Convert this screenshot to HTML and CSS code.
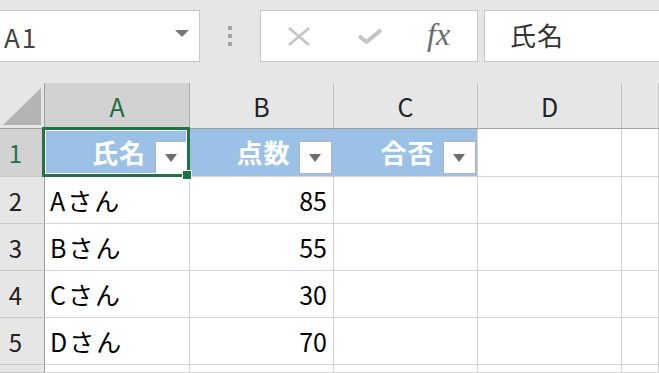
FILE: index.html
```html
<!DOCTYPE html>
<html lang="ja">
<head>
    <meta charset="UTF-8">
    <meta name="viewport" content="width=device-width, initial-scale=1.0">
    <title>Sheet</title>
    <link rel="stylesheet" href="styles.css">
</head>
<body>
    <div class="formula-bar">
        <div class="name-box">
            <span class="name-text">A1</span>
            <span class="name-arrow"></span>
        </div>
        <div class="grip"><i></i><i></i><i></i></div>
        <div class="fx-buttons">
            <svg class="icon-cancel" width="24" height="19" viewBox="0 0 24 19">
                <path d="M2 1 L22 18 M22 1 L2 18" stroke="#c4c4c4" stroke-width="2.6" fill="none"/>
            </svg>
            <svg class="icon-enter" width="26" height="16" viewBox="0 0 26 16">
                <path d="M2 8 L9.5 14 L24 2" stroke="#c4c4c4" stroke-width="4" fill="none"/>
            </svg>
            <span class="fx">fx</span>
        </div>
        <div class="formula-input">氏名</div>
    </div>

    <div class="sheet">
        <div class="corner">
            <svg width="45" height="46" viewBox="0 0 45 46">
                <polygon points="41,5 41,42 3,42" fill="#b4b4b4"/>
            </svg>
        </div>
        <div class="col-head selected">A</div>
        <div class="col-head">B</div>
        <div class="col-head">C</div>
        <div class="col-head">D</div>
        <div class="col-head"></div>

        <div class="row-head selected">1</div>
        <div class="cell title">氏名<span class="filter"></span></div>
        <div class="cell title">点数<span class="filter"></span></div>
        <div class="cell title last">合否<span class="filter"></span></div>
        <div class="cell"></div>
        <div class="cell"></div>

        <div class="row-head">2</div>
        <div class="cell name">Aさん</div>
        <div class="cell num">85</div>
        <div class="cell"></div>
        <div class="cell"></div>
        <div class="cell"></div>

        <div class="row-head">3</div>
        <div class="cell name">Bさん</div>
        <div class="cell num">55</div>
        <div class="cell"></div>
        <div class="cell"></div>
        <div class="cell"></div>

        <div class="row-head">4</div>
        <div class="cell name">Cさん</div>
        <div class="cell num">30</div>
        <div class="cell"></div>
        <div class="cell"></div>
        <div class="cell"></div>

        <div class="row-head">5</div>
        <div class="cell name">Dさん</div>
        <div class="cell num">70</div>
        <div class="cell"></div>
        <div class="cell"></div>
        <div class="cell"></div>

        <div class="row-head"></div>
        <div class="cell"></div>
        <div class="cell"></div>
        <div class="cell"></div>
        <div class="cell"></div>
        <div class="cell"></div>

        <div class="selection"><span class="handle"></span></div>
    </div>
</body>
</html>
```

FILE: styles.css
```css
* {
    box-sizing: border-box;
}
body {
    margin: 0;
    width: 659px;
    height: 373px;
    overflow: hidden;
    background-color: #e6e6e6;
    font-family: "Noto Sans CJK JP", "Noto Sans", sans-serif;
    color: #000;
}
.formula-bar {
    display: flex;
    align-items: flex-start;
    height: 83px;
    padding-top: 10px;
}
.name-box {
    width: 200px;
    height: 52px;
    background-color: #fff;
    border: 1px solid #c6c6c6;
    border-left: none;
    display: flex;
    align-items: center;
    justify-content: space-between;
    padding: 0 10px 0 4px;
}
.name-text {
    font-size: 26px;
    letter-spacing: 2px;
    color: #444;
}
.name-arrow {
    width: 0;
    height: 0;
    border-left: 7px solid transparent;
    border-right: 7px solid transparent;
    border-top: 7px solid #777;
    margin-bottom: 6px;
}
.grip {
    width: 60px;
    display: flex;
    flex-direction: column;
    align-items: center;
    gap: 4px;
    padding-top: 16px;
}
.grip i {
    display: block;
    width: 4px;
    height: 4px;
    background-color: #a5a5a5;
}
.fx-buttons {
    width: 218px;
    height: 52px;
    background-color: #fff;
    border: 1px solid #c6c6c6;
    display: flex;
    align-items: center;
    padding-left: 26px;
}
.icon-cancel {
    margin-right: 46px;
}
.icon-enter {
    margin-right: 44px;
}
.fx {
    font-family: "Liberation Serif", serif;
    font-style: italic;
    font-size: 32px;
    color: #6b6b6b;
    margin-top: -4px;
}
.formula-input {
    flex: 1;
    height: 52px;
    margin-left: 6px;
    margin-right: -2px;
    background-color: #fff;
    border: 1px solid #c6c6c6;
    font-size: 26px;
    letter-spacing: 1px;
    color: #333;
    padding-left: 25px;
    line-height: 48px;
}
.sheet {
    position: relative;
    display: grid;
    grid-template-columns: 45px 145px 144px 144px 144px 1fr;
    grid-template-rows: 46px 48px 47px 47px 47px 47px 8px;
    background-color: #fff;
}
.corner {
    background-color: #e6e6e6;
    border-right: 1px solid #9e9e9e;
    border-bottom: 1px solid #9e9e9e;
}
.corner svg {
    display: block;
}
.col-head {
    background-color: #e6e6e6;
    border-right: 1px solid #c4c4c4;
    border-bottom: 1px solid #9e9e9e;
    display: flex;
    align-items: center;
    justify-content: center;
    font-size: 25px;
    color: #222;
}
.col-head.selected {
    background-color: #d2d2d2;
    color: #1f6b42;
    border-right-color: #ababab;
}
.row-head {
    background-color: #e6e6e6;
    border-right: 1px solid #9e9e9e;
    border-bottom: 1px solid #c8c8c8;
    display: flex;
    align-items: center;
    justify-content: center;
    padding-right: 13px;
    font-size: 24px;
    color: #222;
}
.row-head.selected {
    background-color: #d2d2d2;
    color: #217346;
}
.cell {
    position: relative;
    border-right: 1px solid #d4d4d4;
    border-bottom: 1px solid #d4d4d4;
    display: flex;
    align-items: center;
    padding: 0 6px 0 5px;
    font-size: 24px;
    white-space: nowrap;
}
.cell.name {
    font-size: 25px;
    letter-spacing: 2px;
}
.cell.num {
    justify-content: flex-end;
    font-size: 25px;
}
.cell.title {
    background-color: #9bc2e6;
    border-right-color: #9bc2e6;
    justify-content: center;
    color: #fff;
    font-weight: bold;
    font-size: 26px;
    letter-spacing: 1px;
    padding: 0 0 2px 4px;
}
.cell.title.last {
    border-right-color: #d4d4d4;
}
.filter {
    position: absolute;
    right: 1px;
    top: 12px;
    width: 33px;
    height: 33px;
    background-color: #fff;
    border: 1px solid #b4b4b4;
}
.filter::after {
    content: "";
    position: absolute;
    left: 9px;
    top: 12px;
    border-left: 6.5px solid transparent;
    border-right: 6.5px solid transparent;
    border-top: 8px solid #6d6d6d;
}
.selection {
    position: absolute;
    left: 42px;
    top: 44px;
    width: 148px;
    height: 50px;
    border: 3px solid #217346;
    box-shadow: inset 0 0 0 1px #fff;
}
.handle {
    position: absolute;
    right: -5px;
    bottom: -6px;
    width: 10px;
    height: 10px;
    background-color: #217346;
    border: 1px solid #fff;
}
```
